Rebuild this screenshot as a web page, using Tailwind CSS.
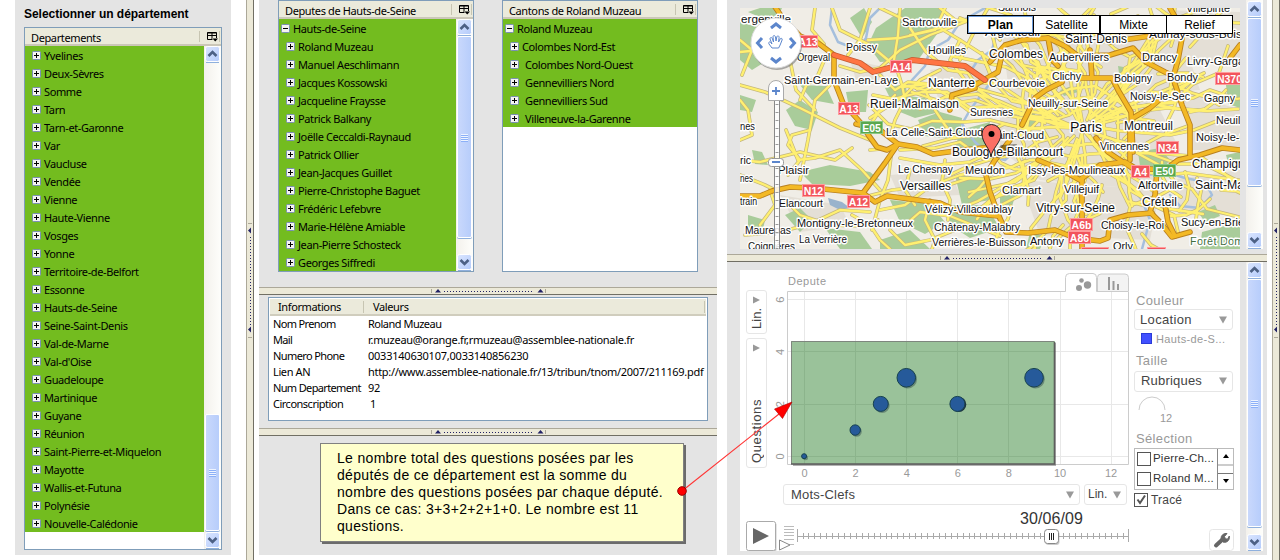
<!DOCTYPE html>
<html lang="fr">
<head>
<meta charset="utf-8">
<title>Deputes</title>
<script src="https://cdn.jsdelivr.net/npm/@tailwindcss/browser@4"></script>
</head>
<body class="w-[1280px] h-[560px] overflow-hidden bg-white relative text-black">
<div class="flex w-[1280px] h-[560px] font-['Noto_Sans',sans-serif] text-[11px] tracking-[-0.38px] pl-[15px]">

  <section class="w-[216px] h-[555px] bg-[#e4e4e4] shrink-0 px-[9px] flex flex-col">
    <h1 class="h-[27px] leading-[28px] font-bold text-[12px] tracking-[-0.03px] font-['Liberation_Sans',sans-serif] whitespace-nowrap">Selectionner un département</h1>
    <div data-tree="dep" class="h-[523px] border border-[#7f9db9] bg-white flex flex-col"></div>
  </section>

  <div data-vsplit class="ml-[15px] mr-[5px] w-[8px] shrink-0 h-[560px] bg-[#ece9d8] border-l border-[#aca899] border-r border-r-[#716f64] flex flex-col items-center pt-[223px]"></div>

  <main class="w-[458px] h-[555px] bg-[#e4e4e4] shrink-0 flex flex-col">
    <div class="h-[287px] pl-[19px] flex gap-[28px] shrink-0">
      <div data-tree="deputes" class="w-[196px] h-[272px] border border-[#7f9db9] bg-white flex flex-col"></div>
      <div data-tree="cantons" class="w-[196px] h-[272px] border border-[#7f9db9] bg-white flex flex-col"></div>
    </div>
    <div data-hsplit class="h-[8px] shrink-0 bg-[#ece9d8] border-t border-[#aca899] border-b border-b-[#716f64] flex items-center pl-[172px]"></div>
    <div class="h-[133px] shrink-0 px-[9px] pt-[2px]">
      <div class="h-[124px] border border-[#7f9db9] bg-white p-px">
        <div class="h-[17px] bg-[#ebeadb] border-b-2 border-[#d0cdbd] flex items-center">
          <span class="w-[94px] pl-[8px] border-r border-[#c7c5b2] leading-[12px]">Informations</span>
          <span class="pl-[9px] grow leading-[12px]">Valeurs</span>
          <span class="w-px h-[12px] bg-[#c7c5b2] mr-px"></span>
        </div>
        <div class="grid grid-cols-[95px_1fr] auto-rows-[16px] leading-[16px] pl-[3px] whitespace-nowrap">
          <span class="tracking-[-0.65px]">Nom Prenom</span><span class="tracking-[-0.5px]">Roland Muzeau</span>
          <span class="tracking-[-0.65px]">Mail</span><span class="tracking-[-0.3px]">r.muzeau@orange.fr,rmuzeau@assemblee-nationale.fr</span>
          <span class="tracking-[-0.6px]">Numero Phone</span><span class="tracking-[-0.23px]">0033140630107,0033140856230</span>
          <span>Lien AN</span><span class="tracking-[-0.31px]">http://www.assemblee-nationale.fr/13/tribun/tnom/2007/211169.pdf</span>
          <span class="tracking-[-0.65px]">Num Departement</span><span>92</span>
          <span class="tracking-[-0.5px]">Circonscription</span><span class="pl-[2px]">1</span>
        </div>
      </div>
    </div>
    <div data-hsplit class="h-[8px] shrink-0 bg-[#ece9d8] border-t border-[#aca899] border-b border-b-[#716f64] flex items-center pl-[172px]"></div>
    <p class="ml-[61px] mt-[7px] w-[364px] h-[99px] bg-[#ffffcc] border border-[#808080] shadow-[2px_2px_0_#6b6b6b] pl-[16px] pt-[6px] font-['Liberation_Sans',sans-serif] text-[14px] leading-[17px] tracking-[0.32px] whitespace-nowrap">Le nombre total des questions posées par les<br>députés de ce département est la somme du<br>nombre des questions posées par chaque député.<br>Dans ce cas: 3+3+2+2+1+0. Le nombre est 11<br>questions.</p>
  </main>

  <aside class="ml-[10px] w-[540px] h-[555px] bg-[#e4e4e4] shrink-0 flex flex-col font-['Liberation_Sans',sans-serif] tracking-[0px]">
    <div class="h-[254px] shrink-0 flex pl-[13px]">
      <div class="mt-[8px] w-[500px] h-[241px]"><svg id="map" class="block" width="500" height="241" viewBox="740 8 500 241"></svg></div>
      <div class="ml-[6px] h-[249px]" data-sb="1,249,17,168"></div>
    </div>
    <div data-hsplit class="h-[8px] shrink-0 bg-[#ece9d8] border-t border-[#aca899] border-b border-b-[#716f64] flex items-center pl-[213px]"></div>
    <div class="flex pl-[13px]">
      <div class="mt-[8px] w-[500px] h-[281px] bg-white flex flex-col text-[#444]">
        <div class="flex h-[240px] shrink-0">
          <div class="w-[390px] flex flex-col">
            <div class="flex h-[214px]">
              <div class="pl-[6px] pt-[20px] w-[27px] flex flex-col gap-[4px] text-[13px]">
                <div class="h-[44px] w-[21px] border border-[#e6e6e6] rounded-[3px] flex flex-col items-center justify-between pt-[5px] pb-[4px]">
                  <svg width="7" height="8"><path d="M0 0.5L7 4L0 7.5z" fill="#999"/></svg>
                  <span class="[writing-mode:vertical-rl] rotate-180 leading-[15px]">Lin.</span>
                </div>
                <div class="h-[130px] w-[21px] border border-[#e6e6e6] rounded-[3px] flex flex-col items-center justify-between pt-[5px] pb-[4px]">
                  <svg width="7" height="8"><path d="M0 0.5L7 4L0 7.5z" fill="#999"/></svg>
                  <span class="[writing-mode:vertical-rl] rotate-180 leading-[15px] tracking-[0.6px]">Questions</span>
                </div>
              </div>
              <svg id="plot" class="block" width="363" height="214" viewBox="767 270 363 214"></svg>
            </div>
            <div class="flex gap-[4px] pl-[43px] text-[13px] leading-[19px]">
              <div class="w-[297px] h-[21px] border border-[#e6e6e6] rounded-[3px] flex items-center pl-[7px] pr-[5px] justify-between tracking-[0.2px]">Mots-Clefs<svg width="8" height="8"><path d="M0 0.5H8L4 7.5z" fill="#999"/></svg></div>
              <div class="w-[43px] h-[21px] border border-[#e6e6e6] rounded-[3px] flex items-center pl-[3px] pr-[5px] justify-between text-[12px]">Lin.<svg width="8" height="8"><path d="M0 0.5H8L4 7.5z" fill="#999"/></svg></div>
            </div>
          </div>
          <div class="w-[110px] pl-[4px] pt-[22px] flex flex-col text-[13px] tracking-[0.35px] whitespace-nowrap">
            <span class="h-[17px] leading-[17px] pl-[2px] text-[#999]">Couleur</span>
            <div class="w-[99px] h-[21px] border border-[#e6e6e6] rounded-[3px] flex items-center pl-[5px] pr-[5px] justify-between">Location<svg width="8" height="8"><path d="M0 0.5H8L4 7.5z" fill="#999"/></svg></div>
            <div class="h-[18px] flex items-center gap-[4px] pl-[7px] text-[11px] text-[#999] tracking-[0.35px]"><i class="w-[11px] h-[11px] bg-[#4150ff] border border-[#2a3bd8]"></i>Hauts-de-S...</div>
            <span class="h-[22px] leading-[24px] pl-[2px] pt-px text-[#999]">Taille</span>
            <div class="w-[99px] h-[21px] mt-px border border-[#e6e6e6] rounded-[3px] flex items-center pl-[6px] pr-[5px] justify-between tracking-[0.2px]">Rubriques<svg width="8" height="8"><path d="M0 0.5H8L4 7.5z" fill="#999"/></svg></div>
            <svg class="block" width="60" height="34"><path d="M5 18a13 13 0 0 1 26 0" fill="none" stroke="#ccc"/><text x="26" y="29.500" font-size="11" fill="#999" letter-spacing="0">12</text></svg>
            <span class="h-[23px] leading-[28px] pl-[2px] text-[#999]">Sélection</span>
            <div class="w-[100px] h-[43px] border border-[#bbb] flex text-[11.5px] tracking-[0.2px] text-[#333]">
              <div class="w-[82px] flex flex-col">
                <div class="flex items-center h-[20px] gap-[2px] pl-[2px]"><i class="w-[14px] h-[14px] border border-[#555]"></i>Pierre-Ch...</div>
                <div class="flex items-center h-[20px] gap-[2px] pl-[2px]"><i class="w-[14px] h-[14px] border border-[#555]"></i>Roland M...</div>
              </div>
              <div class="w-[16px] border-l border-[#888] flex flex-col items-center justify-between">
                <div class="h-[17px] w-full border-b-2 border-[#ccc] flex items-center justify-center"><svg width="6" height="4"><path d="M0 4L3 0L6 4z"/></svg></div>
                <div class="h-[16px] w-full border-t border-[#777] flex items-center justify-center"><svg width="6" height="4"><path d="M0 0L3 4L6 0z"/></svg></div>
              </div>
            </div>
            <div class="flex items-center h-[21px] gap-[3px] text-[12px] tracking-[0.2px]"><svg width="14" height="14"><rect x=".5" y=".5" width="13" height="13" fill="#fff" stroke="#555"/><path d="M3.5 6.500l2.500 3.500L11 2.500" fill="none" stroke="#555" stroke-width="2"/></svg>Tracé</div>
          </div>
        </div>
        <svg id="time" class="block" width="500" height="41" viewBox="740 510 500 41"></svg>
      </div>
      <div class="ml-[6px] h-[289px]" data-sb="0,289,17,248"></div>
    </div>
  </aside>

  <div data-vsplit class="ml-[5px] w-[8px] shrink-0 h-[560px] bg-[#ece9d8] border-l border-[#aca899] border-r border-r-[#716f64] flex flex-col items-center pt-[223px]"></div>
</div>

<svg class="absolute left-0 top-0 pointer-events-none" width="1280" height="560"><path d="M682 491L784 410" stroke="#f33" stroke-width="1.1"/><path d="M792 402L774.500 409L782.500 418.500z" fill="#f00" stroke="#a00" stroke-width=".6"/><circle cx="682" cy="491" r="4.300" fill="#f00" stroke="#900"/></svg>

<script>
const $$ = s => document.querySelectorAll(s);
// ---- scrollbars
const chev = d => `<svg class="block" width="17" height="17"><defs><linearGradient id="sbg" x2="1" y2="1"><stop stop-color="#dbe6ff"/><stop offset="1" stop-color="#b4cbfb"/></linearGradient></defs><rect x="1.500" y=".5" width="14" height="15" rx="2" fill="url(#sbg)" stroke="#fff"/><path d="M2 16.500H15" stroke="#8fb0dd"/><path d="${d}" fill="none" stroke="#4d6185" stroke-width="2.600"/></svg>`;
const sb = (pad, h, t, th) => `<div class="w-[17px] flex flex-col bg-linear-to-r from-[#f3f1ec] to-[#fefefb]" style="height:${h}px;padding-top:${pad}px">${chev('M4.500 10L8.500 6L12.500 10')}<div class="ml-px w-[15px] shrink-0 border border-white rounded-[2px] bg-linear-to-r from-[#c9d8fc] to-[#b7cdfb] shadow-[0_1px_0_#8fb0dd] flex flex-col items-center justify-center gap-px" style="margin-top:${t-17}px;height:${th}px">${'<i class="w-[7px] h-px bg-[#eef4ff] shadow-[0_1px_0_#8cb0f8]"></i>'.repeat(4)}</div><div class="mt-auto">${chev('M4.500 6L8.500 10L12.500 6')}</div></div>`;
$$('[data-sb]').forEach(e => e.innerHTML = sb(...e.dataset.sb.split(',').map(Number)));
// ---- trees
const box = m => `<svg class="block shrink-0" width="9" height="9"><rect x=".5" y=".5" width="8" height="8" rx="1" fill="#f4f4f2" stroke="#7b8fb5"/><path d="M2 4.500H7${m ? '' : 'M4.500 2V7'}" stroke="#000"/></svg>`;
const trees = {
 dep: {t:'Departements', pad:'pl-[7px]', sb:[0,503,368,117], rows:"Yvelines|Deux-Sèvres|Somme|Tarn|Tarn-et-Garonne|Var|Vaucluse|Vendée|Vienne|Haute-Vienne|Vosges|Yonne|Territoire-de-Belfort|Essonne|Hauts-de-Seine|Seine-Saint-Denis|Val-de-Marne|Val-d'Oise|Guadeloupe|Martinique|Guyane|Réunion|Saint-Pierre-et-Miquelon|Mayotte|Wallis-et-Futuna|Polynésie|Nouvelle-Calédonie"},
 deputes: {t:'Deputes de Hauts-de-Seine', root:'Hauts-de-Seine', pad:'pl-[7px]', sb:[0,252,17,202], rows:"Roland Muzeau|Manuel Aeschlimann|Jacques Kossowski|Jacqueline Fraysse|Patrick Balkany|Joëlle Ceccaldi-Raynaud|Patrick Ollier|Jean-Jacques Guillet|Pierre-Christophe Baguet|Frédéric Lefebvre|Marie-Hélène Amiable|Jean-Pierre Schosteck|Georges Siffredi"},
 cantons: {t:'Cantons de Roland Muzeau', root:'Roland Muzeau', pad:'pl-[7px]', rows:"Colombes Nord-Est|_Colombes Nord-Ouest|_Gennevilliers Nord|_Gennevilliers Sud|_Villeneuve-la-Garenne"}
};
$$('[data-tree]').forEach(e => {
  const d = trees[e.dataset.tree];
  const row = (s, cls, m) => `<div class="h-[18px] flex items-center gap-[3px] leading-[16px] ${cls}">${box(m)}<span class="pt-[2px] ${s[0]=='_' ? 'pl-[3px]' : ''}">${s.replace('_','')}</span></div>`;
  e.innerHTML = `<div class="h-[18px] shrink-0 bg-[#ebeadb] border-b-2 border-[#cbc7b8] flex items-center pl-[6px] whitespace-nowrap"><span class="grow pt-[4px] leading-[14px]">${d.t}</span><i class="w-px h-[11px] bg-[#c7c5b2] mr-[7px]"></i><svg class="mt-[2px]" width="11" height="10"><path d="M.5 .5h9v7h-9zM.5 1h9M.5 3.500h9M5 1v6.500" fill="none" stroke="#000"/><path d="M5.500 6H11V10H5.500z" fill="#ebeadb"/><path d="M5.500 6.500H11L8.200 9.500z"/></svg><i class="w-px h-[11px] bg-[#c7c5b2] ml-px mr-px"></i></div>
  <div class="flex grow"><div class="grow whitespace-nowrap"><div class="bg-[#73bc1f]">${d.root ? row(d.root,'pl-[2px]',1) : ''}${d.rows.split('|').map(s => row(s, d.pad, 0)).join('')}</div></div>${d.sb ? sb(...d.sb) : ''}</div>`;
});
// ---- splitters
$$('[data-hsplit]').forEach(e => e.innerHTML = `<svg class="block" width="116" height="6"><path d="M.5 1V5M114.500 1V5" stroke="#aca899"/><path d="M4 4.500L7 1L10 4.500zM106.500 4.500L109.500 1L112.500 4.500z" fill="#226"/><path d="M13 3.500H103" stroke="#226" stroke-dasharray="1 2"/></svg>`);
$$('[data-vsplit]').forEach(e => e.innerHTML = `<svg class="block shrink-0" width="6" height="116"><path d="M1 .5H5M1 114.500H5" stroke="#aca899"/><path d="M4 4.500L1 7.500L4 10.500zM4 103.500L1 106.500L4 109.500z" fill="#226"/><path d="M3.500 14V103" stroke="#226" stroke-dasharray="1 2"/></svg>`);

// ---- map
const greens = ["740,22 760,28 768,60 752,70 740,60","748,12 775,24 782,8 760,8","876,28 905,8 945,8 940,30 918,60 880,62 868,45","846,92 868,90 866,112 850,112","800,85 826,86 834,104 812,100","885,88 905,84 908,96 890,98","786,110 800,100 818,112 812,130 795,126","900,95 925,98 940,112 915,118 900,112","940,112 962,118 960,140 925,136 918,120","960,130 990,122 985,148 955,150","800,172 830,165 870,172 880,180 850,186 812,184","740,95 756,100 752,112 740,110","752,150 762,152 768,165 755,164","890,200 930,204 945,222 925,234 900,222","950,205 985,205 1000,228 970,238 950,225","955,175 985,178 990,200 962,205","825,228 860,232 872,249 840,249","880,240 910,230 930,249 880,249","748,215 765,220 762,234 748,230","785,215 800,208 812,220 800,232","1138,152 1160,148 1170,160 1160,172 1140,166","1000,190 1016,194 1012,206 1000,204","1118,66 1140,70 1136,82 1120,80","1226,85 1240,80 1240,108 1228,104","1020,110 1035,112 1036,128 1022,130","1202,232 1240,222 1240,249 1200,249","1226,155 1240,152 1240,164 1228,163","1030,232 1046,236 1040,249 1026,249","1198,212 1215,205 1220,216 1205,222","1060,90 1072,86 1078,92 1064,96","850,18 864,8 872,22 862,38","1160,20 1178,22 1176,30 1162,30"];
const greys = ["1000,100 1150,90 1180,150 1150,190 1040,180 1000,150","1000,20 1180,30 1200,90 1010,100","1020,180 1160,190 1150,240 1040,235","1180,90 1240,110 1240,150 1190,150","930,70 990,60 990,110 940,105","850,60 880,66 885,80 856,80","890,175 950,170 960,195 900,198","1160,10 1240,12 1240,60 1180,60","1170,180 1240,170 1240,215 1180,215","780,195 840,205 850,225 800,232"];
const water = ["832,8 830,25 838,42 858,50 866,38 870,18 880,8","985,8 960,22 948,40 930,50 925,66 912,80 908,96 915,106","1000,70 985,90 970,110 962,124 975,142 990,156 1005,160 1016,150","1000,20 992,50 978,60 970,72","1110,165 1125,180 1142,200 1150,220 1142,249","1148,175 1165,172 1185,178 1205,182 1212,195 1200,208 1180,206 1170,195"];
const hw = ["773,4 784,20 800,36 818,43 834,55 834,80 843,103 860,122 869,136 877,147 887,150 898,144 917,147 933,154 963,150 992,147","856,124 880,130 898,144 885,163 863,193","740,196 760,196 772,191 790,187 813,188 863,193 875,202 887,196 910,199 940,203 960,212 998,216","1010,140 995,160 986,175 990,192 998,214 1006,232 1028,233 1055,230 1075,238 1100,241 1108,238 1110,220 1128,215 1152,213","990,62 1005,45 1022,40 1048,38 1065,46 1078,56 1110,55 1133,48 1146,62 1165,72 1178,78","1183,33 1178,60 1173,78 1182,105 1190,125 1190,155","1048,38 1052,60 1058,66","1090,50 1092,78","1075,78 1112,78 1118,90 1131,112 1133,152","1062,82 1046,90 1035,98 1022,125","1133,118 1150,108 1165,95","1038,160 1062,170 1080,180 1100,165 1125,162 1135,168 1165,170 1178,160 1200,155 1222,148 1240,150","1096,138 1108,152 1132,168","1157,170 1155,195 1150,212 1160,222 1172,237 1190,232","1165,205 1168,222 1175,236","1082,178 1082,215 1082,249","1170,8 1178,22 1183,33 1150,36 1110,42","1230,58 1240,45","975,85 998,72 1003,50","950,110 952,95 975,88","1130,130 1130,160"];
const yl = ["740,52 760,50 790,58 834,56","740,85 765,92 800,108 840,128 870,140","832,8 840,30 870,45 900,70","900,8 898,35 894,60 902,85 925,90 945,82","870,8 860,40 848,55","910,35 940,28 960,40 988,58","880,75 895,90 908,82 940,85","840,66 860,72 880,68 900,50 930,35 970,20","945,8 935,30 900,38 868,40","830,85 815,100 808,140 800,180","786,130 798,160 815,158 840,150 862,170 880,190","740,40 752,50 742,75","788,175 800,160 788,145 792,135 810,130","740,160 760,162 800,152 835,160 852,148","740,175 765,185 775,190","870,150 892,148 888,180 880,200 872,230","868,196 892,190 930,186 960,175 985,170","880,210 905,205 925,190 945,186 970,178","745,235 780,232 810,224 840,210 870,212","852,215 870,225 880,240 890,249","785,200 800,215 830,225 860,226 878,220","930,200 925,220 935,240 932,249","900,150 935,148 960,142 985,160","900,158 940,165 970,162 985,155","902,85 905,100 895,120 890,138","925,90 935,110 945,125 955,138","912,92 930,98 950,104 975,100 992,106","870,118 890,105 905,95 920,80 940,70","895,95 880,110 872,122","960,40 950,60 965,80 985,95","940,8 955,20 985,22 1000,40","988,8 975,30 960,60","790,60 796,90 815,110","760,225 775,205 770,190","740,140 752,135 748,110 740,100","905,225 920,212 950,216 975,226 1000,236","890,230 905,245 930,240 960,228","910,170 905,190 915,205","945,160 942,182 950,200 948,220","880,8 905,20 935,22","815,8 812,30 824,44","826,56 818,75 806,86 800,100"];
// denser street mesh of the inner urban area
let seed = 11; const rnd = () => (seed = (seed * 16807) % 2147483647) / 2147483647;
for (let i = 0; i < 60; i++) { let a = rnd() * 6.283, r = 3 + rnd() * 26, s = [], n = 4 + rnd() * 4; for (let j = 0; j < n; j++) { s.push((1082 + Math.cos(a) * r * 1.35).toFixed(0) + ',' + (128 + Math.sin(a) * r).toFixed(0)); r += 14 + rnd() * 10; a += (rnd() - .5) * .3; } yl.push(s.join(' ')); }
for (let i = 0; i < 62; i++) { let x = 990 + rnd() * 240, y = 10 + rnd() * 230, a = rnd() * 6.283, s = []; for (let j = 0; j < 4; j++) { s.push(x.toFixed(0) + ',' + y.toFixed(0)); x += Math.cos(a) * 15; y += Math.sin(a) * 14; a += (rnd() - .5) * 1.1; } yl.push(s.join(' ')); }
for (const r of [16, 27, 38]) { let s = []; for (let j = 0; j <= 14; j++) { const a = j / 14 * 6.283, q = r + (j % 14 % 3) * 2.5; s.push((1082 + Math.cos(a) * q * 1.35).toFixed(0) + ',' + (128 + Math.sin(a) * q).toFixed(0)); } yl.push(s.join(' ')); }
const P = (a, at) => a.map(p => `<polyline points="${p}" ${at}/>`).join('');
const G = (a, c) => a.map(p => `<polygon points="${p}" fill="${c}"/>`).join('');
const L = [["ergenville",741,23,50],["Sartrouville",902,26,55],["Poissy",846,51,31],["Houilles",928,54,38],["Orgeval",797,61,33],["Saint-Germain-en-Laye",784,84,114],["Nanterre",928,87,47,12],["Rueil-Malmaison",870,108,89,12],["Suresnes",970,116,43],["Colombes",989,58,54,12],["Courbevoie",989,87,56],["Saint-Denis",1065,43,62,12],["Aubervilliers",1049,61,60],["Clichy",1052,80,29],["Bobigny",1114,82,38],["Bondy",1167,81,31],["Drancy",1142,61,35],["Livry-Gargan",1187,65,63],["Aulnay-sous-Bois",1149,38,93],["Sannois",998,11,38],["Villepinte",1186,12,44],["Argenteuil",985,36,55],["Neuilly-sur-Seine",1028,107,80],["Noisy-le-Sec",1130,100,60],["Gagny",1204,102,31],["Neuilly-sur-Marne",1216,124,84],["Montreuil",1124,130,49,12],["Paris",1070,132,32,14],["Vincennes",1100,150,49],["Noisy-le-Grand",1196,141,74],["Champigny",1192,168,58,12],["Saint-Maur",1195,189,60,12],["Alfortville",1138,189,45],["Créteil",1142,206,35,12],["Issy-les-Moulineaux",1028,174,97],["Clamart",1002,194,39],["Villejuif",1064,193,35],["Vitry-sur-Seine",1036,212,79,12],["Choisy-le-Roi",1101,229,63],["Sucy-en-Brie",1181,226,63],["Orly",1113,250,20],["Antony",1030,245,34],["Verrières-le-Buisson",932,246,94],["Châtenay-Malabry",934,231,86],["Vélizy-Villacoublay",925,213,88],["Versailles",900,190,51,12],["Le Chesnay",898,173,55],["Meudon",965,174,40],["Saint-Cloud",990,139,54],["La Celle-Saint-Cloud",886,136,97],["Boulogne-Billancourt",952,156,111,12],["Plaisir",778,174,31],["Elancourt",779,207,44],["Montigny-le-Bretonneux",797,227,116,11.5],["La Verrière",799,243,48],["Maurepas",745,234,46],["Coignières",748,250,47],["nes",740,130,15],["ric",740,164,11],["nes",740,182,13],["train",740,205,17]];
const S = [["A13",798,35,20],["A14",890,60,22],["A13",838,102,22],["E05",860,121,23,1],["N12",802,184,23],["A12",847,195,23],["N370",1215,72,29],["N34",1156,141,23],["A4",1131,165,19],["E50",1153,164,23,1],["A6b",1070,218,23],["A86",1068,231,23],["",1081,247,28],["",1147,247,19]];
const tab = (t, x, b) => `<rect x="${x+.5}" y="15.500" width="66" height="18" fill="#fff" stroke="#000"/>${b?`<rect x="${x+1.500}" y="16.500" width="64" height="16" fill="none" stroke="#6d9bd8"/>`:''}<text x="${x+33.500}" y="29" text-anchor="middle" font-size="12" ${b?'font-weight="bold"':''}>${t}</text>`;
document.getElementById('map').innerHTML = `<rect x="740" y="8" width="500" height="241" fill="#f0ede6"/>${G(greys,'#e4dfd6')}${G(greens,'#a9cc9a')}
<g fill="none" stroke-linejoin="round" stroke-linecap="round">${P(water,'stroke="#a5bfdd" stroke-width="2.500"')}<path d="M828 198l14 4 8 6-10 2-10-5z" fill="#99b3cc"/>
${P(yl,'stroke="#c4b67c" stroke-width="3.700"')}${P(yl,'stroke="#fff070" stroke-width="2.300"')}
${P(hw,'stroke="#b9801f" stroke-width="5.600"')}${P(hw,'stroke="#f3b925" stroke-width="3.800"')}
${P(["834,55 860,63 873,72 892,67 912,60 930,62 965,66 985,80"],'stroke="#c75a30" stroke-width="5.800"')}${P(["834,55 860,63 873,72 892,67 912,60 930,62 965,66 985,80"],'stroke="#ff7542" stroke-width="4.300"')}</g>
<path d="M991 157l10-12 16-1-4 9-14 5z" fill="#000" opacity=".4"/>
${S.map(([t,x,y,w,g]) => `<rect x="${x+.5}" y="${y+.5}" width="${w-1}" height="12" fill="${g?'#5aa84f':'#f2545b'}" stroke="${g?'#8cc985':'#ff9c9c'}"/><text x="${x+w/2}" y="${y+10.500}" text-anchor="middle" font-size="10.500" font-weight="bold" fill="#fff">${t}</text>`).join('')}
<g fill="#111" stroke="#fff" stroke-width="2.800" stroke-linejoin="round" paint-order="stroke">${L.map(([t,x,y,w,s]) => `<text x="${x}" y="${y}" textLength="${w}" lengthAdjust="spacingAndGlyphs" font-size="${s||11}">${t}</text>`).join('')}<text x="1190" y="245" font-size="11" fill="#3f6f3f" textLength="84">Forêt Domaniale</text></g>
<path d="M991 157C990 148 982 143 982 134a9.500 9.500 0 0 1 19 0C1001 143 992 148 991 157z" fill="#fb6f64" stroke="#222"/><circle cx="991.500" cy="134" r="3" fill="#000"/>
<rect x="774.500" y="100" width="5" height="150" fill="#fff" fill-opacity=".85" stroke="#888"/><path d="M777 104V249" stroke="#999" stroke-width="3" stroke-dasharray="1 7"/>
<circle cx="777" cy="45" r="25" fill="#777" opacity=".6"/><circle cx="776" cy="43" r="25" fill="#fff" stroke="#ddd"/>
<g fill="none" stroke="#5c86cc" stroke-width="3"><path d="M771 28L776 24L781 28M771 58L776 62L781 58M762 38L757.500 43L762 48M790 38L794.500 43L790 48"/></g>
<path d="M772 48l-3-4c-1-2 1-3 2-1l1 1-2-5c0-2 2-2 2.500 0l1 3-.5-5c0-2 2-2 2.500 0l.5 4 .8-4c.5-2 2.500-1 2.300.5l-.5 4.500 1.500-3c1-1.500 2.500-.5 2 1l-2 5-1.500 3z" fill="#fff" stroke="#5c86cc"/>
<path d="M768.500 100.500V88a7.500 7.500 0 0 1 15 0V100.500z" fill="#fff" stroke="#aaa"/><path d="M772 91H780M776 87V95" stroke="#5c86cc" stroke-width="1.800"/>
<rect x="768.500" y="158.500" width="15" height="8" rx="3" fill="#fff" stroke="#999"/><path d="M772 162H780" stroke="#5c86cc" stroke-width="2"/>
${tab('Satellite',1033)}${tab('Mixte',1100)}${tab('Relief',1166)}${tab('Plan',967,1)}`;

// ---- scatter plot
const X = v => 804.5 + v * 25.55, Y = v => 456.5 - v * 26.15, r5 = v => Math.floor(v) + .5;
const pts = [[0,0,2.5],[2,1,5.2],[3,2,7.5],[4,3,9.3],[6,2,7.5],[9,3,9.3]];
document.getElementById('plot').innerHTML = `
<text x="788" y="285" font-size="11" fill="#999" textLength="38">Depute</text>
<path d="${[0,2,4,6,8,10,12].map(v => `M${r5(X(v))} 292V464`).join('')}${[0,2,4,6].map(v => `M788 ${r5(Y(v))}H1128`).join('')}" stroke="#e8e8e8"/>
<path d="M1097.500 291V277.500q0-3.500 3.500-3.500h24q3.500 0 3.500 3.500V291" fill="#f3f3f3" stroke="#ccc"/>
<path d="M787.500 291.500H1065.500V277.500q0-4 4-4h23.500q3.500 0 3.500 4V291.500H1128.500V464.500H787.500z" fill="none" stroke="#ccc"/>
<g fill="#999"><circle cx="1081.500" cy="280.500" r="2.300"/><circle cx="1079" cy="288" r="3"/><circle cx="1087.500" cy="285" r="3.700"/><path d="M1108 277h2v13h-2zM1112.500 281h2v9h-2zM1117 284h2v6h-2z"/></g>
<path d="M793 343H1056V466H793z" fill="#000" opacity=".3"/><rect x="791" y="341" width="264" height="123" fill="#fff"/><path d="${[0,2,4,6,8].map(v => `M${r5(X(v))} 342V464`).join('')}${[0,2,4].map(v => `M791 ${r5(Y(v))}H1054`).join('')}" stroke="#e2e2e2"/>
<rect x="791" y="341" width="264" height="123" fill="#358635" fill-opacity=".5"/><path d="M791.500 464V341.500H1054" fill="none" stroke="#777" opacity=".8"/><path d="M791 464H1054.500V342" fill="none" stroke="#5d5d5d" stroke-width="1.600"/>
${pts.map(([x,y,r]) => `<circle cx="${X(x)+1}" cy="${Y(y)+(x==6?.2:1.2)}" r="${r}" fill="#123" opacity="${x==6?.9:.35}"/><circle cx="${X(x)-.4}" cy="${Y(y)-.3}" r="${r}" fill="#265a9a" stroke="#17424f"/>`).join('')}
<g font-size="11" fill="#999" text-anchor="middle">${[0,2,4,6,8,10,12].map(v => `<text x="${X(v)}" y="477">${v}</text>`).join('')}${[0,2,4,6].map(v => `<text transform="translate(784 ${Y(v)}) rotate(-90)">${v}</text>`).join('')}</g>`;

// ---- timeline
let ticks = ''; for (let x = 803; x < 1127; x += 5.93) ticks += `M${r5(x)} 533V539`;
document.getElementById('time').innerHTML = `
<rect x="747.500" y="522.500" width="29" height="29" rx="2" fill="#ccc"/><rect x="746.500" y="521.500" width="29" height="29" rx="2" fill="#fff" stroke="#aaa"/><path d="M753 528L769 536L753 544z" fill="#666"/>
<path d="M784 526.500H794M784 529.500H794M784 532.500H794M784 535.500H794M784 539.500H794M784 544.500H794" stroke="#bbb"/><path d="M779.500 540L790 545L779.500 550z" fill="#fff" stroke="#888"/>
<path d="M797.500 529V542M1128.500 529V542M797 536.500H1128${ticks}" stroke="#aaa"/>
<text x="1020" y="524" font-size="16" fill="#333" textLength="63">30/06/09</text>
<rect x="1045.500" y="531" width="14" height="14" rx="3" fill="#999" opacity=".5"/><rect x="1044.500" y="529.500" width="14" height="14" rx="3" fill="#fff" stroke="#888"/><path d="M1049.500 533V540M1051.500 533V540M1053.500 533V540" stroke="#222"/>
<rect x="1209.500" y="529.500" width="24" height="21" rx="3" fill="#fff" stroke="#e6e6e6"/><path d="M1216 545.500L1223 539" stroke="#666" stroke-width="4" stroke-linecap="round"/><path d="M1221 538.500a5 5 0 0 1 6-5l-2.500 3 .8 2.200 2.200.5 1.800-3.200a5 5 0 0 1-6 6.200z" fill="#666" stroke="#666"/>`;
</script>
</body>
</html>
